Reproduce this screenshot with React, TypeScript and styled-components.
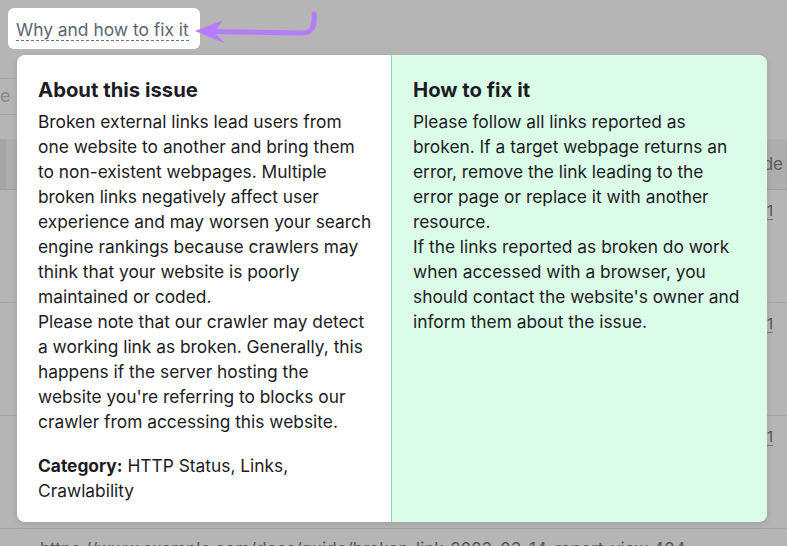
import React from 'react';
import styled, { createGlobalStyle } from 'styled-components';

const Global = createGlobalStyle`
  html, body {
    margin: 0;
    padding: 0;
    background: #b5b5b5;
    font-family: Inter, "Noto Sans", sans-serif;
  }
  #root {
    width: 787px;
    height: 546px;
    overflow: hidden;
  }
`;

const Page = styled.div`
  position: relative;
  width: 787px;
  height: 546px;
  overflow: hidden;
  background: #b5b5b5;
`;

/* dimmed page behind the popover */
const Behind = styled.div`
  display: flex;
  flex-direction: column;
  padding-top: 78px;
`;

const SearchBox = styled.div`
  height: 33px;
  width: 110px;
  border-top: 1px solid #a3a3a3;
  border-bottom: 1px solid #a3a3a3;
  display: flex;
  align-items: center;
  font-size: 18px;
  color: #8b8b8b;
  margin-left: -11px;
  padding-bottom: 2px;
`;

const HeadRow = styled.div`
  margin-top: 24px;
  height: 50px;
  background: #adadad;
  border-bottom: 1px solid #a2a2a2;
  display: flex;
  align-items: center;
  justify-content: space-between;
`;

const HeadCell = styled.div`
  width: 6px;
  height: 100%;
  background: #a6a6a8;
`;

const HeadLabel = styled.span`
  font-size: 17px;
  color: #5c5c5c;
  margin-right: 4px;
`;

const Row = styled.div`
  height: 113px;
  border-bottom: 1px solid #a2a2a2;
  display: flex;
  justify-content: flex-end;
  padding: 12px 14px 0 0;
  box-sizing: border-box;
`;

const Count = styled.span`
  font-size: 15px;
  color: #555;
  border-bottom: 1px dashed #777;
  height: 17px;
  line-height: 17px;
`;

const UrlRow = styled.div`
  padding: 10px 0 0 40px;
  font-size: 17px;
  color: #555;
  white-space: nowrap;
`;

/* the trigger and its pointer, raised above the dim */
const Trigger = styled.div`
  position: absolute;
  left: 8px;
  top: 8px;
  width: 192px;
  height: 41px;
  background: #fff;
  border-radius: 6px;
  display: flex;
  align-items: center;
  padding-left: 8px;
  box-sizing: border-box;
`;

const TriggerText = styled.span`
  font-size: 17.4px;
  color: #5b6573;
  border-bottom: 1px dashed #6c7380;
  line-height: 20px;
  margin-top: 4px;
`;

const Arrow = styled.svg`
  position: absolute;
  left: 190px;
  top: 4px;
`;

const Card = styled.div`
  position: absolute;
  left: 17px;
  top: 55px;
  width: 750px;
  height: 467px;
  border-radius: 8px;
  overflow: hidden;
  display: grid;
  grid-template-columns: 374px 1fr;
  box-shadow: 0 2px 6px rgba(0, 0, 0, 0.12);
`;

const Panel = styled.div<{ $fix?: boolean }>`
  background: ${p => (p.$fix ? '#dbfde8' : '#ffffff')};
  border-left: ${p => (p.$fix ? '1px solid #8fdcb2' : 'none')};
  padding: 21px 8px 0 21px;
  color: #1c1c24;
`;

const Title = styled.h3`
  margin: 0 0 6px;
  font-size: 20.3px;
  font-weight: 700;
  line-height: 27px;
`;

const Text = styled.p`
  margin: 0;
  font-size: 17.35px;
  line-height: 25px;
  white-space: nowrap;
`;

const Meta = styled(Text)`
  margin-top: 19px;
`;

export default function App() {
  return (
    <Page>
      <Global />
      <Behind>
        <SearchBox>ge</SearchBox>
        <HeadRow>
          <HeadCell />
          <HeadLabel>de</HeadLabel>
        </HeadRow>
        <Row><Count>1</Count></Row>
        <Row><Count>1</Count></Row>
        <Row><Count>1</Count></Row>
        <UrlRow>https://www.example.com/docs/guide/broken-link-2023-03-14-report-view 404</UrlRow>
      </Behind>

      <Trigger>
        <TriggerText>Why and how to fix it</TriggerText>
      </Trigger>
      <Arrow width="135" height="45" viewBox="0 0 135 45">
        <path
          d="M20 27.5 L112 29 Q126 29.5 124 10"
          fill="none"
          stroke="#b57cff"
          strokeWidth="5"
          strokeLinecap="round"
        />
        <path d="M5 27 L33 16.5 L24 28 L35 39.5 Z" fill="#b57cff" />
      </Arrow>

      <Card>
        <Panel>
          <Title>About this issue</Title>
          <Text>
            Broken external links lead users from<br />
            one website to another and bring them<br />
            to non-existent webpages. Multiple<br />
            broken links negatively affect user<br />
            experience and may worsen your search<br />
            engine rankings because crawlers may<br />
            think that your website is poorly<br />
            maintained or coded.
          </Text>
          <Text>
            Please note that our crawler may detect<br />
            a working link as broken. Generally, this<br />
            happens if the server hosting the<br />
            website you're referring to blocks our<br />
            crawler from accessing this website.
          </Text>
          <Meta>
            <b>Category:</b> HTTP Status, Links,<br />
            Crawlability
          </Meta>
        </Panel>
        <Panel $fix>
          <Title>How to fix it</Title>
          <Text>
            Please follow all links reported as<br />
            broken. If a target webpage returns an<br />
            error, remove the link leading to the<br />
            error page or replace it with another<br />
            resource.
          </Text>
          <Text>
            If the links reported as broken do work<br />
            when accessed with a browser, you<br />
            should contact the website's owner and<br />
            inform them about the issue.
          </Text>
        </Panel>
      </Card>
    </Page>
  );
}
